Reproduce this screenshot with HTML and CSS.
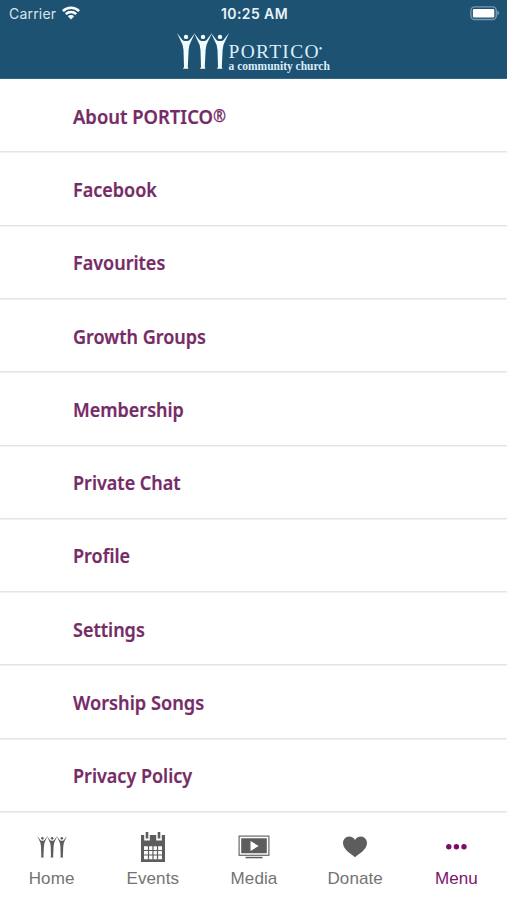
FILE: index.html
```html
<!DOCTYPE html>
<html lang="en">
<head>
<meta charset="utf-8">
<title>PORTICO</title>
<link rel="stylesheet" href="styles.css">
</head>
<body>
<svg width="0" height="0" class="defs">
  <defs>
    <g id="person">
      <path d="M0 0 L4 8.5 Q6.4 12 6.5 17 L7 33.8 Q7 35 5.8 35.8 H11.4 L10.8 33.8 L11.6 17 Q11.8 12 14 8.5 L18 0 L12.4 7.2 Q9 9 5.6 7.2 Z"/>
      <circle cx="9" cy="3.9" r="2.2"/>
    </g>
    <g id="people">
      <use href="#person"/>
      <use href="#person" x="17"/>
      <use href="#person" x="34"/>
    </g>
  </defs>
</svg>
<div class="app">
  <header class="header">
    <div class="status">
      <div class="carrier"><span>Carrier</span>
        <svg class="wifi" viewBox="0 0 18 14"><path d="M0 4.2A12.8 12.8 0 0 1 18 4.2L16.2 6A10.2 10.2 0 0 0 1.8 6ZM2.9 7.2A8.7 8.7 0 0 1 15.1 7.2L13.3 9A6.2 6.2 0 0 0 4.7 9ZM5.8 10.3A4.5 4.5 0 0 1 12.2 10.3L9 13.6Z"/></svg>
      </div>
      <time class="time">10:25 AM</time>
      <svg class="battery" viewBox="0 0 31 15"><rect x=".9" y=".9" width="25.4" height="12.6" rx="3.8"/><rect class="charge" x="2.9" y="2.9" width="21.4" height="8.6" rx="1.2"/><path d="M27.4 4.6Q31.2 7.1 27.4 9.6Z"/></svg>
    </div>
    <div class="brand">
      <svg class="brand-mark" viewBox="0 0 52 36"><use href="#people"/></svg>
      <div class="brand-text">
        <div class="brand-name">PORTICO<sup>•</sup></div>
        <div class="brand-tag">a community church</div>
      </div>
    </div>
  </header>
  <main class="list">
    <a class="row"><span class="about">About PORTICO<i>®</i></span></a>
    <a class="row"><span>Facebook</span></a>
    <a class="row"><span>Favourites</span></a>
    <a class="row"><span>Growth Groups</span></a>
    <a class="row"><span>Membership</span></a>
    <a class="row"><span>Private Chat</span></a>
    <a class="row"><span>Profile</span></a>
    <a class="row"><span>Settings</span></a>
    <a class="row"><span class="worship">Worship Songs</span></a>
    <a class="row"><span>Privacy Policy</span></a>
  </main>
  <nav class="tabs">
    <a class="tab"><svg class="icon" viewBox="0 0 32 32"><use href="#people" transform="translate(1.3 5) scale(.57 .6)"/></svg><span>Home</span></a>
    <a class="tab"><svg class="icon" viewBox="0 0 32 32"><path fill-rule="evenodd" d="M4 4H7.2V9.5H12.8V4H19.2V9.5H24.8V4H28V31H4ZM7 15.2V28.2H25V15.2Z"/><path d="M8.7 1H11.3V7.5H8.7ZM20.7 1H23.3V7.5H20.7Z"/><path class="grid" d="M11.5 15V28.5M16 15V28.5M20.5 15V28.5M7 19.5H25M7 24H25"/></svg><span>Events</span></a>
    <a class="tab"><svg class="icon" viewBox="0 0 32 32"><rect class="frame" x="1.1" y="5.1" width="29.8" height="19.2"/><path fill-rule="evenodd" d="M3.2 7.2H28.8V22.2H3.2ZM12.5 10V20L20.7 15Z"/><path d="M7.5 25.8H24.5V27.3H7.5Z"/></svg><span>Media</span></a>
    <a class="tab"><svg class="icon" viewBox="0 0 32 32"><path d="M16 26.2C13 23.5 4 19 4 12C4 8.5 6.7 5.5 10 5.5C12.8 5.5 15 6.8 16 8.9C17 6.8 19.2 5.5 22 5.5C25.3 5.5 28 8.5 28 12C28 19 19 23.5 16 26.2Z"/></svg><span>Donate</span></a>
    <a class="tab active"><svg class="icon" viewBox="0 0 32 32"><circle cx="8.8" cy="15.8" r="2.7"/><circle cx="16.4" cy="15.8" r="2.7"/><circle cx="24" cy="15.8" r="2.7"/></svg><span>Menu</span></a>
  </nav>
</div>
</body>
</html>
```
FILE: styles.css
```css
* { box-sizing: border-box; }
body { margin: 0; background: #fff; }
.defs { display: block; height: 0; }
.app { width: 507px; height: 900px; display: flex; flex-direction: column; overflow: hidden; font-family: Inter, "Liberation Sans", sans-serif; }
.header { height: 79px; flex: none; background: #1d5273; border-bottom: 1px solid #326687; color: #fff; }
.status { height: 28px; padding: 0 6px 0 9px; display: grid; grid-template-columns: 1fr auto 1fr; align-items: center; }
.carrier { display: flex; align-items: center; gap: 6px; font-size: 14px; line-height: 28px; letter-spacing: .2px; color: #d8e5ee; }
.wifi { width: 18px; height: 14px; fill: #fff; margin-top: -2px; }
.time { margin-left: -1px; font-size: 14px; font-weight: 600; line-height: 28px; letter-spacing: .4px; color: #e9f2f8; }
.battery { width: 31px; height: 15px; justify-self: end; margin-top: -2px; fill: #7799ad; }
.battery rect:first-child { fill: none; stroke: #7799ad; stroke-width: 1.4; }
.battery .charge { fill: #fff; }
.brand { display: flex; padding: 5px 0 0 176.5px; }
.brand-mark { width: 52px; height: 36px; fill: #f2fbff; }
.brand-text { font-family: "Liberation Serif", serif; color: #dceefa; white-space: nowrap; }
.brand-name { margin-top: 9px; height: 18px; font-size: 19.5px; line-height: 20px; letter-spacing: 1.3px; }
.brand-name sup { font-size: 10px; line-height: 0; vertical-align: 6px; letter-spacing: 0; margin-left: -1px; }
.brand-tag { font-size: 11.5px; font-weight: 700; line-height: 12px; }
.list { height: 733px; flex: none; display: grid; grid-template-rows: repeat(10, 1fr); }
.row { display: flex; align-items: center; padding: 3px 0 0 73px; border-bottom: 1px solid #e4e4e4; box-shadow: 0 1px #f2f2f2; color: #762b67; font: 600 20px/30px "Noto Sans", sans-serif; }
.row span { display: inline-block; transform: scaleX(.9); transform-origin: 0 50%; white-space: nowrap; -webkit-text-stroke: .2px #762b67; }
.row .about { transform: scaleX(.92); }
.row .worship { transform: scaleX(.91); }
.row i { font-style: normal; font-size: 17px; font-weight: 600; vertical-align: 2px; }
.tabs { flex: 1; display: grid; grid-template-columns: repeat(5, 1fr); padding-left: 1px; }
.tab { display: flex; flex-direction: column; align-items: center; padding-top: 19px; color: #737373; font: 17px/20px "Liberation Sans", sans-serif; letter-spacing: .1px; }
.tab span { margin-top: 6px; }
.icon { width: 32px; height: 32px; fill: #5d5d5d; }
.icon .grid { fill: none; stroke: #5d5d5d; stroke-width: 1.2; }
.icon .frame { fill: none; stroke: #686868; stroke-width: 1.2; }
.active { color: #7d146c; }
.active .icon { fill: #7d0b68; }
```
